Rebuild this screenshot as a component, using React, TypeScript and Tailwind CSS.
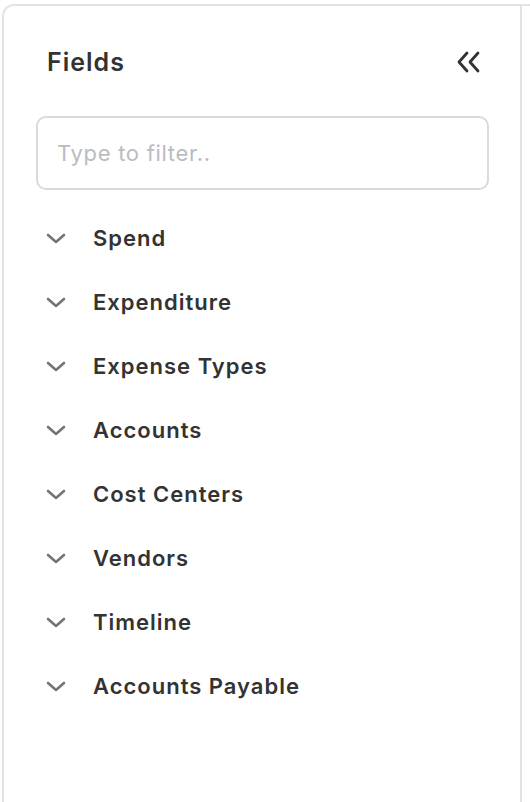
const fields = [
  'Spend',
  'Expenditure',
  'Expense Types',
  'Accounts',
  'Cost Centers',
  'Vendors',
  'Timeline',
  'Accounts Payable',
]

function Chevron() {
  return (
    <svg width="20" height="11" viewBox="0 0 20 11" fill="none" className="shrink-0">
      <polyline points="2,2 10,9 18,2" stroke="#757575" strokeWidth="2.6" strokeLinecap="round" strokeLinejoin="round" />
    </svg>
  )
}

function CollapseIcon() {
  return (
    <svg width="24" height="22" viewBox="0 0 24 22" fill="none">
      <polyline points="11,2 3,11 11,20" stroke="#333" strokeWidth="2.8" strokeLinecap="round" strokeLinejoin="round" />
      <polyline points="22,2 14,11 22,20" stroke="#333" strokeWidth="2.8" strokeLinecap="round" strokeLinejoin="round" />
    </svg>
  )
}

export default function App() {
  return (
    <div className="h-[802px] overflow-hidden bg-white pt-[4px] pl-[2px] font-['Inter',sans-serif]">
      <div className="flex h-[820px] rounded-tl-[12px] border-t-2 border-l-2 border-[#e3e3e3]">
        <div className="w-[518px] border-r-2 border-[#e3e3e3] px-[32px]">
          {/* Header */}
          <div className="mt-[38px] flex items-center justify-between pl-[11px] pr-[8px]">
            <h2 className="text-[25px] font-semibold tracking-[1px] text-[#333333]">Fields</h2>
            <div className="-mt-[2px]">
              <CollapseIcon />
            </div>
          </div>

          {/* Filter */}
          <input
            type="text"
            placeholder="Type to filter.."
            className="mt-[34px] h-[74px] w-[453px] rounded-[10px] border-2 border-[#d8dadd] px-[19px] text-[22px] tracking-[0.7px] text-[#333] outline-none placeholder:text-[#b9bcc1]"
          />

          {/* Field groups */}
          <ul className="mt-[17px]">
            {fields.map((f) => (
              <li key={f} className="flex h-[64px] items-center pl-[10px]">
                <Chevron />
                <span className="ml-[27px] text-[22px] font-semibold tracking-[1px] text-[#333333]">{f}</span>
              </li>
            ))}
          </ul>
        </div>
      </div>
    </div>
  )
}
